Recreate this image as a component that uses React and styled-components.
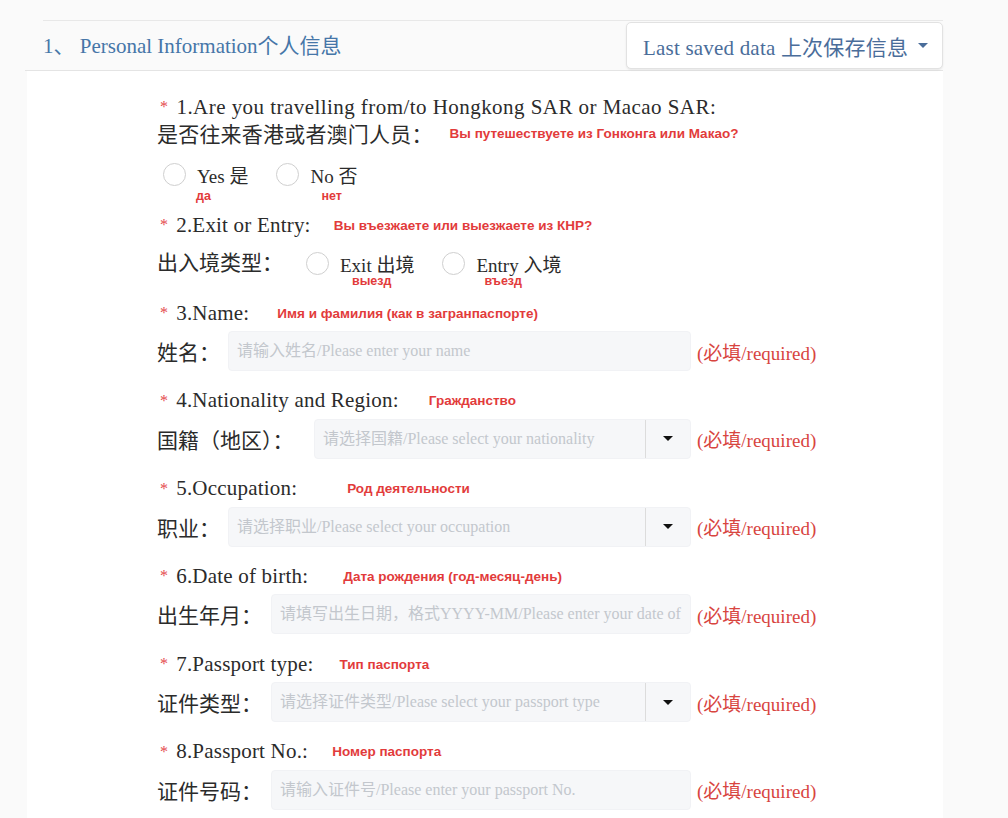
import React from 'react';
import styled, { createGlobalStyle } from 'styled-components';

const GlobalStyle = createGlobalStyle`
    html, body {
        margin: 0;
        background: #fafafa;
    }
    body {
        font-family: "Liberation Serif", "Noto Sans CJK SC", serif;
        color: #2b2b2b;
    }
`;

const fields = [
    { no: '3.Name:', ru: 'Имя и фамилия (как в загранпаспорте)', ruGap: 28, label: '姓名：', labelWidth: 71, placeholder: '请输入姓名/Please enter your name' },
    { no: '4.Nationality and Region:', ru: 'Гражданство', ruGap: 30, label: '国籍（地区）：', labelWidth: 157, placeholder: '请选择国籍/Please select your nationality', select: true },
    { no: '5.Occupation:', ru: 'Род деятельности', ruGap: 50, label: '职业：', labelWidth: 71, placeholder: '请选择职业/Please select your occupation', select: true },
    { no: '6.Date of birth:', ru: 'Дата рождения (год-месяц-день)', ruGap: 35, label: '出生年月：', labelWidth: 114, placeholder: '请填写出生日期，格式YYYY-MM/Please enter your date of birth' },
    { no: '7.Passport type:', ru: 'Тип паспорта', ruGap: 26, label: '证件类型：', labelWidth: 114, placeholder: '请选择证件类型/Please select your passport type', select: true },
    { no: '8.Passport No.:', ru: 'Номер паспорта', ruGap: 24, label: '证件号码：', labelWidth: 114, placeholder: '请输入证件号/Please enter your passport No.' },
];

export default function App() {
    return (
        <>
            <GlobalStyle />
            <Page>
                <Header>
                    <HeaderBar>
                        <Title>1、 Personal Information个人信息</Title>
                        <SavedButton>
                            Last saved data 上次保存信息
                            <Caret $color="#4a6d9a" />
                        </SavedButton>
                    </HeaderBar>
                </Header>
                <Body>
                    <Question $spacing={0.45}>
                        <Star>*</Star>1.Are you travelling from/to Hongkong SAR or Macao SAR:
                    </Question>
                    <Question>
                        是否往来香港或者澳门人员：
                        <Note $gap={17}>Вы путешествуете из Гонконга или Макао?</Note>
                    </Question>
                    <RadioRow $top={15} $bottom={9}>
                        <Option>
                            <OptionLine>
                                <Radio />
                                Yes 是
                            </OptionLine>
                            <OptionNote $left={33} $top={2}>да</OptionNote>
                        </Option>
                        <Option>
                            <OptionLine>
                                <Radio />
                                No 否
                            </OptionLine>
                            <OptionNote $left={45} $top={2}>нет</OptionNote>
                        </Option>
                    </RadioRow>

                    <Question>
                        <Star>*</Star>2.Exit or Entry:
                        <Note $gap={23}>Вы въезжаете или выезжаете из КНР?</Note>
                    </Question>
                    <RadioRow $top={12} $bottom={12}>
                        <InlineLabel>出入境类型：</InlineLabel>
                        <Option>
                            <OptionLine>
                                <Radio />
                                Exit 出境
                            </OptionLine>
                            <OptionNote $left={46} $top={-2}>выезд</OptionNote>
                        </Option>
                        <Option>
                            <OptionLine>
                                <Radio />
                                Entry 入境
                            </OptionLine>
                            <OptionNote $left={42} $top={-2}>въезд</OptionNote>
                        </Option>
                    </RadioRow>

                    {fields.map((f) => (
                        <Item key={f.no}>
                            <Question>
                                <Star>*</Star>
                                {f.no}
                                <Note $gap={f.ruGap}>{f.ru}</Note>
                            </Question>
                            <FieldRow>
                                <FieldMain>
                                    <FieldLabel $width={f.labelWidth}>{f.label}</FieldLabel>
                                    {f.select ? (
                                        <SelectBox>
                                            <TextInput readOnly placeholder={f.placeholder} />
                                            <SelectArrow>
                                                <Caret $color="#111" />
                                            </SelectArrow>
                                        </SelectBox>
                                    ) : (
                                        <InputBox>
                                            <TextInput placeholder={f.placeholder} />
                                        </InputBox>
                                    )}
                                </FieldMain>
                                <Required>(必填/required)</Required>
                            </FieldRow>
                        </Item>
                    ))}
                </Body>
            </Page>
        </>
    );
}

const Page = styled.div`
    width: 918px;
    margin-left: 25px;
    padding-top: 20px;
`;

const Header = styled.div`
    padding-left: 18px;
    border-bottom: 1px solid #e4e4e4;
`;

const HeaderBar = styled.div`
    display: flex;
    align-items: center;
    justify-content: space-between;
    height: 49px;
    border-top: 1px solid #e8e8e8;
`;

const Title = styled.div`
    margin-top: -3px;
    font-size: 21px;
    color: #4676a8;
    white-space: pre;
`;

const SavedButton = styled.div`
    display: flex;
    align-items: center;
    gap: 10px;
    box-sizing: border-box;
    height: 47px;
    width: 317px;
    padding-left: 16px;
    background: #fff;
    border: 1px solid #e2e2e2;
    border-radius: 5px;
    box-shadow: 0 1px 2px rgba(0, 0, 0, 0.08);
    font-size: 21px;
    letter-spacing: 0.2px;
    color: #4a6d9a;
    white-space: nowrap;
`;

const Caret = styled.span`
    display: inline-block;
    width: 0;
    height: 0;
    border-left: 5px solid transparent;
    border-right: 5px solid transparent;
    border-top: 5px solid ${(p) => p.$color};
`;

const Body = styled.div`
    background: #fff;
    margin-left: 2px;
    padding: 23px 0 20px 130px;
`;

const Question = styled.div`
    display: flex;
    align-items: center;
    height: 26px;
    font-size: 21px;
    letter-spacing: ${(p) => p.$spacing ?? 0.2}px;
    white-space: nowrap;
`;

const Star = styled.span`
    color: #e5484d;
    font-size: 16px;
    margin: 0 8px 0 3px;
`;

const Note = styled.span`
    margin-left: ${(p) => p.$gap}px;
    font-family: "Liberation Sans", Arial, sans-serif;
    font-weight: bold;
    font-size: 13.5px;
    letter-spacing: 0;
    color: #e23b3b;
`;

const RadioRow = styled.div`
    display: flex;
    align-items: flex-start;
    margin: ${(p) => p.$top}px 0 ${(p) => p.$bottom}px;
    padding-left: 6px;
    gap: 28px;
`;

const InlineLabel = styled.div`
    height: 26px;
    line-height: 26px;
    font-size: 21px;
    margin-left: -6px;
    margin-right: -5px;
`;

const Option = styled.div`
    display: flex;
    flex-direction: column;
`;

const OptionLine = styled.div`
    display: flex;
    align-items: center;
    gap: 11px;
    height: 26px;
    font-size: 19px;
`;

const Radio = styled.span`
    box-sizing: border-box;
    width: 23px;
    height: 23px;
    border: 1px solid #cfcfcf;
    border-radius: 50%;
    background: #fff;
`;

const OptionNote = styled.span`
    margin: ${(p) => p.$top}px 0 0 ${(p) => p.$left}px;
    line-height: 14px;
    font-family: "Liberation Sans", Arial, sans-serif;
    font-weight: bold;
    font-size: 12.5px;
    color: #e23b3b;
`;

const Item = styled.div`
    margin-bottom: 16.8px;
`;

const FieldRow = styled.div`
    display: flex;
    align-items: center;
    margin-top: 5px;
`;

const FieldMain = styled.div`
    display: flex;
    align-items: center;
    width: 534px;
`;

const FieldLabel = styled.div`
    flex: none;
    width: ${(p) => p.$width}px;
    font-size: 21px;
    white-space: nowrap;
`;

const InputBox = styled.div`
    flex: 1;
    display: flex;
    box-sizing: border-box;
    height: 40px;
    background: #f6f7f9;
    border: 1px solid #f1f2f5;
    border-radius: 4px;
    overflow: hidden;
`;

const SelectBox = styled(InputBox)``;

const TextInput = styled.input`
    flex: 1;
    min-width: 0;
    border: none;
    outline: none;
    background: transparent;
    padding: 0 8px;
    font-family: "Liberation Serif", "Noto Sans CJK SC", serif;
    font-size: 16px;
    color: #333;

    &::placeholder {
        color: #c3c7cd;
    }
`;

const SelectArrow = styled.div`
    flex: none;
    display: flex;
    align-items: center;
    justify-content: center;
    width: 44px;
    border-left: 1px solid #dcdcdc;
`;

const Required = styled.div`
    margin-left: 6px;
    font-size: 19px;
    color: #d8453f;
    white-space: nowrap;
`;
